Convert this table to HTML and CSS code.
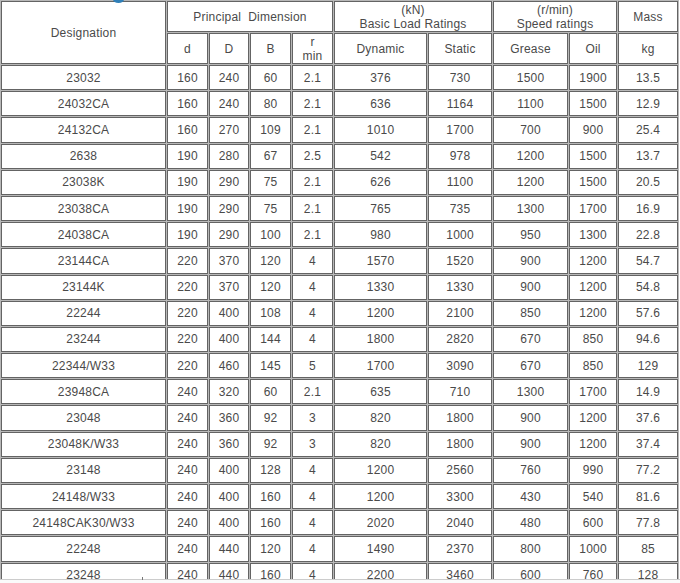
FILE: index.html
```html
<!DOCTYPE html>
<html>
<head>
<meta charset="utf-8">
<link rel="stylesheet" href="styles.css">
</head>
<body>
<div class="page">
<table class="spec">
<colgroup>
<col class="c-des"><col class="c-d"><col class="c-D"><col class="c-B"><col class="c-r">
<col class="c-dyn"><col class="c-sta"><col class="c-gre"><col class="c-oil"><col class="c-mas">
</colgroup>
<thead>
<tr class="h1">
<th rowspan="2">Designation</th>
<th colspan="4">Principal&nbsp; Dimension</th>
<th colspan="2">(kN)<br>Basic Load Ratings</th>
<th colspan="2">(r/min)<br>Speed ratings</th>
<th>Mass</th>
</tr>
<tr class="h2">
<th>d</th><th>D</th><th>B</th><th class="rmin">r<br>min</th>
<th>Dynamic</th><th>Static</th><th>Grease</th><th>Oil</th><th>kg</th>
</tr>
</thead>
<tbody>
<tr><td>23032</td><td>160</td><td>240</td><td>60</td><td>2.1</td><td>376</td><td>730</td><td>1500</td><td>1900</td><td>13.5</td></tr>
<tr><td>24032CA</td><td>160</td><td>240</td><td>80</td><td>2.1</td><td>636</td><td>1164</td><td>1100</td><td>1500</td><td>12.9</td></tr>
<tr><td>24132CA</td><td>160</td><td>270</td><td>109</td><td>2.1</td><td>1010</td><td>1700</td><td>700</td><td>900</td><td>25.4</td></tr>
<tr><td>2638</td><td>190</td><td>280</td><td>67</td><td>2.5</td><td>542</td><td>978</td><td>1200</td><td>1500</td><td>13.7</td></tr>
<tr><td>23038K</td><td>190</td><td>290</td><td>75</td><td>2.1</td><td>626</td><td>1100</td><td>1200</td><td>1500</td><td>20.5</td></tr>
<tr><td>23038CA</td><td>190</td><td>290</td><td>75</td><td>2.1</td><td>765</td><td>735</td><td>1300</td><td>1700</td><td>16.9</td></tr>
<tr><td>24038CA</td><td>190</td><td>290</td><td>100</td><td>2.1</td><td>980</td><td>1000</td><td>950</td><td>1300</td><td>22.8</td></tr>
<tr><td>23144CA</td><td>220</td><td>370</td><td>120</td><td>4</td><td>1570</td><td>1520</td><td>900</td><td>1200</td><td>54.7</td></tr>
<tr><td>23144K</td><td>220</td><td>370</td><td>120</td><td>4</td><td>1330</td><td>1330</td><td>900</td><td>1200</td><td>54.8</td></tr>
<tr><td>22244</td><td>220</td><td>400</td><td>108</td><td>4</td><td>1200</td><td>2100</td><td>850</td><td>1200</td><td>57.6</td></tr>
<tr><td>23244</td><td>220</td><td>400</td><td>144</td><td>4</td><td>1800</td><td>2820</td><td>670</td><td>850</td><td>94.6</td></tr>
<tr><td>22344/W33</td><td>220</td><td>460</td><td>145</td><td>5</td><td>1700</td><td>3090</td><td>670</td><td>850</td><td>129</td></tr>
<tr><td>23948CA</td><td>240</td><td>320</td><td>60</td><td>2.1</td><td>635</td><td>710</td><td>1300</td><td>1700</td><td>14.9</td></tr>
<tr><td>23048</td><td>240</td><td>360</td><td>92</td><td>3</td><td>820</td><td>1800</td><td>900</td><td>1200</td><td>37.6</td></tr>
<tr><td>23048K/W33</td><td>240</td><td>360</td><td>92</td><td>3</td><td>820</td><td>1800</td><td>900</td><td>1200</td><td>37.4</td></tr>
<tr><td>23148</td><td>240</td><td>400</td><td>128</td><td>4</td><td>1200</td><td>2560</td><td>760</td><td>990</td><td>77.2</td></tr>
<tr><td>24148/W33</td><td>240</td><td>400</td><td>160</td><td>4</td><td>1200</td><td>3300</td><td>430</td><td>540</td><td>81.6</td></tr>
<tr><td>24148CAK30/W33</td><td>240</td><td>400</td><td>160</td><td>4</td><td>2020</td><td>2040</td><td>480</td><td>600</td><td>77.8</td></tr>
<tr><td>22248</td><td>240</td><td>440</td><td>120</td><td>4</td><td>1490</td><td>2370</td><td>800</td><td>1000</td><td>85</td></tr>
<tr><td>23248</td><td>240</td><td>440</td><td>160</td><td>4</td><td>2200</td><td>3460</td><td>600</td><td>760</td><td>128</td></tr>
</tbody>
</table>
<div class="blob"></div>
<div class="bottom-edge"><span class="tick"></span></div>
</div>
</body>
</html>
```
FILE: styles.css
```css
html, body {
  margin: 0;
  padding: 0;
  background: #ffffff;
}
.page {
  position: relative;
  width: 680px;
  height: 583px;
  overflow: hidden;
}
.spec {
  table-layout: fixed;
  width: 678px;
  border-collapse: separate;
  border-spacing: 1px;
  background: #b8b8b8;
  font-family: "Liberation Sans", Arial, sans-serif;
  font-size: 12px;
  color: #4a4a4a;
}
.spec th, .spec td {
  background: #ffffff;
  border: 1px solid #646464;
  padding: 0;
  text-align: center;
  vertical-align: middle;
  font-weight: normal;
  line-height: 14px;
  letter-spacing: 0.2px;
  overflow: hidden;
  white-space: nowrap;
}
.c-des { width: 165px; }
.c-d { width: 41px; }
.c-D { width: 40px; }
.c-B { width: 41px; }
.c-r { width: 41px; }
.c-dyn { width: 93px; }
.c-sta { width: 64px; }
.c-gre { width: 75px; }
.c-oil { width: 48px; }
.c-mas { width: 60px; }
.h1, .h2 { height: 31px; }
.rmin { line-height: 14px; padding-top: 1px; }
.spec tbody tr { height: 25.2px; }
.blob {
  position: absolute;
  left: 113px;
  top: -4px;
  width: 11px;
  height: 7px;
  border-radius: 50%;
  background: #2f7fb8;
}
.bottom-edge {
  position: absolute;
  left: 0;
  top: 579px;
  width: 680px;
  height: 4px;
  background: #fafafa;
  border-top: 1px solid #cccccc;
}
.tick {
  position: absolute;
  left: 142px;
  top: -3px;
  width: 1px;
  height: 3px;
  background: #777777;
}
```
